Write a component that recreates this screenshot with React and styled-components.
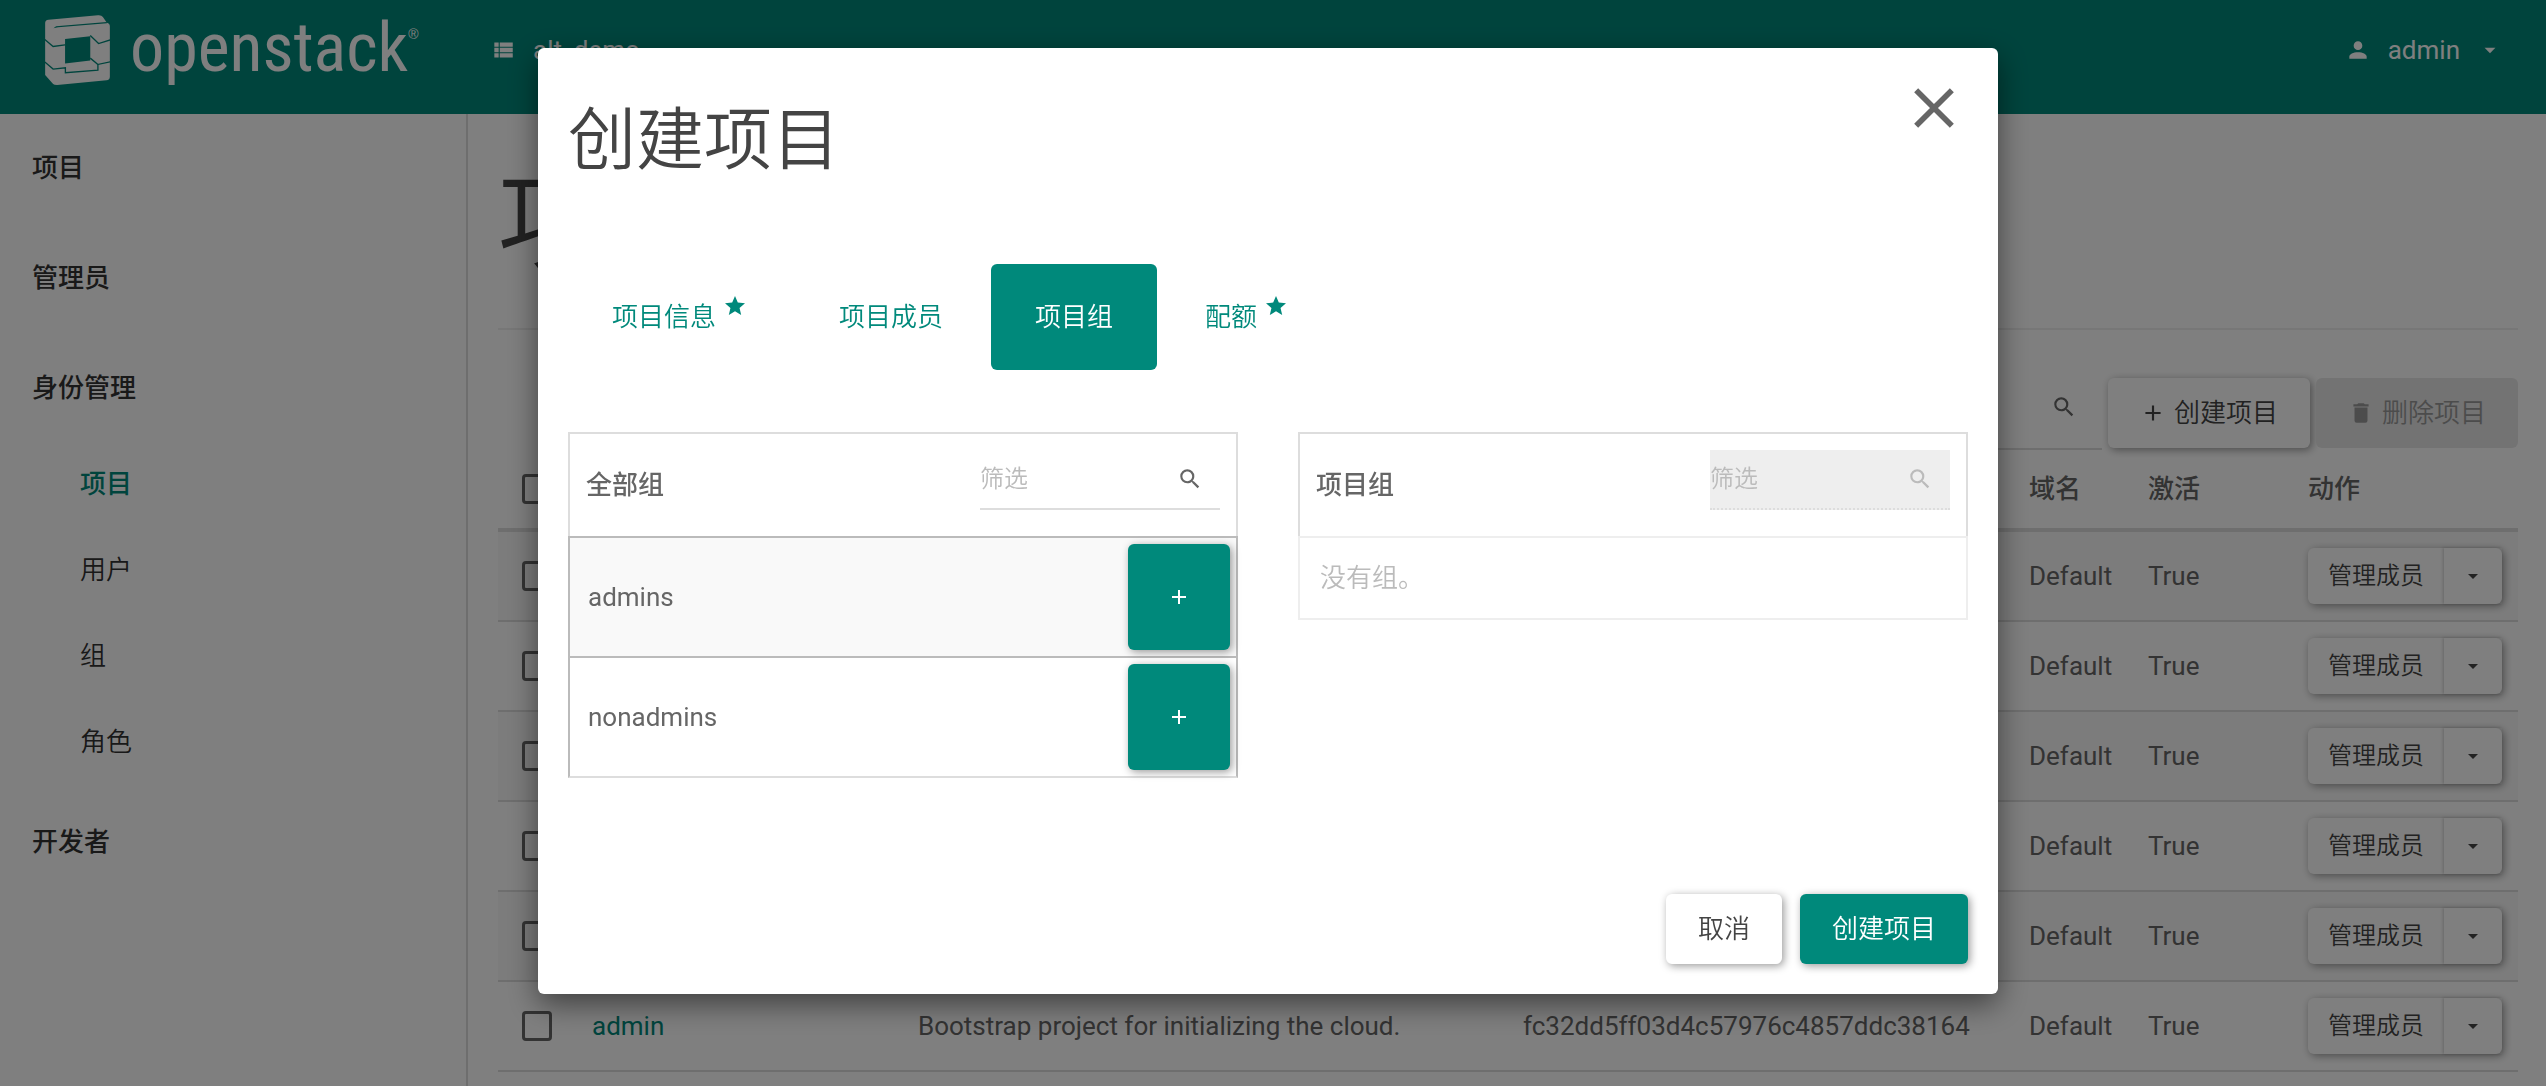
import styled, { createGlobalStyle } from "styled-components";

const ICONS = {
  list: "M9,5V9H21V5M9,19H21V15H9M9,14H21V10H9M4,9H8V5H4M4,19H8V15H4M4,14H8V10H4V14Z",
  account:
    "M12,4A4,4 0 0,1 16,8A4,4 0 0,1 12,12A4,4 0 0,1 8,8A4,4 0 0,1 12,4M12,14C16.42,14 20,15.79 20,18V20H4V18C4,15.79 7.58,14 12,14Z",
  caret: "M7,10L12,15L17,10H7Z",
  search:
    "M9.5,3A6.5,6.5 0 0,1 16,9.5C16,11.11 15.41,12.59 14.44,13.73L14.71,14H15.5L20.5,19L19,20.5L14,15.5V14.71L13.73,14.44C12.59,15.41 11.11,16 9.5,16A6.5,6.5 0 0,1 3,9.5A6.5,6.5 0 0,1 9.5,3M9.5,5C7,5 5,7 5,9.5C5,12 7,14 9.5,14C12,14 14,12 14,9.5C14,7 12,5 9.5,5Z",
  plus: "M19,13H13V19H11V13H5V11H11V5H13V11H19V13Z",
  trash:
    "M19,4H15.5L14.5,3H9.5L8.5,4H5V6H19M6,19A2,2 0 0,0 8,21H16A2,2 0 0,0 18,19V7H6V19Z",
  star: "M12,17.27L18.18,21L16.54,13.97L22,9.24L14.81,8.62L12,2L9.19,8.62L2,9.24L7.45,13.97L5.82,21L12,17.27Z",
  close:
    "M19,6.41L17.59,5L12,10.59L6.41,5L5,6.41L10.59,12L5,17.59L6.41,19L12,13.41L17.59,19L19,17.59L13.41,12L19,6.41Z",
};

function Icon({ name, size = 26 }) {
  return (
    <svg width={size} height={size} viewBox="0 0 24 24" fill="currentColor" aria-hidden="true">
      <path d={ICONS[name]} />
    </svg>
  );
}

function LogoMark() {
  return (
    <svg width="65" height="70" viewBox="27 20 195 211" aria-hidden="true">
      <path
        fill="#fff"
        d="M27 44Q27 35 37 34L186 21Q197 20 201 26L213 43Q222 45 222 54V206Q222 216 212 217L63 231Q54 231 51 228L27 201Z"
      />
      <path fill="#00897b" d="M87 92L163 84V157L87 166Z" />
      <path fill="#00897b" d="M52 60L60 54L213 41V45L66 57Z" />
      <g fill="none" stroke="#00897b" strokeWidth="4">
        <path d="M26 94L51 115L87 110" />
        <path d="M163 82L188 106L223 95" />
        <path d="M26 162L51 183L88 179V194L186 186V169L223 161" />
        <path d="M163 150L186 169" />
      </g>
    </svg>
  );
}

const menu = [
  { label: "项目" },
  { label: "管理员" },
  { label: "身份管理", children: ["项目", "用户", "组", "角色"] },
  { label: "开发者" },
];

const projects = [
  { key: 1 },
  { key: 2 },
  { key: 3 },
  { key: 4 },
  { key: 5 },
  {
    key: 6,
    name: "admin",
    desc: "Bootstrap project for initializing the cloud.",
    id: "fc32dd5ff03d4c57976c4857ddc38164",
  },
];

const tabs = [
  { label: "项目信息", required: true },
  { label: "项目成员" },
  { label: "项目组", active: true },
  { label: "配额", required: true },
];

const groups = ["admins", "nonadmins"];

function Filter({ label, disabled, toolbar }) {
  return (
    <FilterBox $disabled={disabled} $toolbar={toolbar}>
      <input
        type="text"
        placeholder={toolbar ? undefined : "筛选"}
        aria-label={label}
        disabled={disabled}
      />
      <Icon name="search" />
    </FilterBox>
  );
}

function App() {
  return (
    <>
      <GlobalStyle />
      <Header>
        <Brand href="#">
          <LogoMark />
          <BrandName>
            openstack<sup>®</sup>
          </BrandName>
        </Brand>
        <HeaderItem href="#">
          <Icon name="list" />
          alt_demo
        </HeaderItem>
        <UserMenu href="#">
          <Icon name="account" />
          admin
          <Icon name="caret" />
        </UserMenu>
      </Header>

      <Body>
        <Sidebar>
          {menu.map((item) => (
            <div key={item.label}>
              <MenuItem href="#">{item.label}</MenuItem>
              {item.children?.map((child, i) => (
                <SubItem href="#" key={child} $active={i === 0}>
                  {child}
                </SubItem>
              ))}
            </div>
          ))}
        </Sidebar>

        <Content>
          <PageTitle>项目</PageTitle>
          <Toolbar>
            <Filter label="筛选项目" toolbar />
            <Button type="button">
              <Icon name="plus" />
              创建项目
            </Button>
            <Button type="button" disabled>
              <Icon name="trash" />
              删除项目
            </Button>
          </Toolbar>
          <Table>
            <colgroup>
              <col width="78" />
              <col width="326" />
              <col />
              <col width="506" />
              <col width="119" />
              <col width="160" />
              <col width="226" />
            </colgroup>
            <thead>
              <tr>
                <th>
                  <Checkbox type="checkbox" aria-label="全选" />
                </th>
                <th aria-label="名称" />
                <th aria-label="描述" />
                <th aria-label="项目ID" />
                <th>域名</th>
                <th>激活</th>
                <th>动作</th>
              </tr>
            </thead>
            <tbody>
              {projects.map((p) => (
                <tr key={p.key}>
                  <td>
                    <Checkbox type="checkbox" aria-label="选择项目" />
                  </td>
                  <td>
                    <a href="#">{p.name}</a>
                  </td>
                  <td>{p.desc}</td>
                  <td>{p.id}</td>
                  <td>Default</td>
                  <td>True</td>
                  <td>
                    <ButtonGroup>
                      <button type="button">管理成员</button>
                      <button type="button" aria-label="更多">
                        <Icon name="caret" size={24} />
                      </button>
                    </ButtonGroup>
                  </td>
                </tr>
              ))}
            </tbody>
          </Table>
        </Content>
      </Body>

      <Backdrop>
        <Modal role="dialog" aria-labelledby="modal-title">
          <ModalHeader>
            <ModalTitle id="modal-title">创建项目</ModalTitle>
            <CloseButton type="button" aria-label="关闭">
              <Icon name="close" size={68} />
            </CloseButton>
          </ModalHeader>
          <Tabs role="tablist">
            {tabs.map((tab) => (
              <Tab type="button" role="tab" key={tab.label} $active={tab.active}>
                {tab.label}
                {tab.required && <Icon name="star" size={24} />}
              </Tab>
            ))}
          </Tabs>
          <Panels>
            <section>
              <PanelHeader>
                <PanelTitle>全部组</PanelTitle>
                <Filter label="筛选全部组" />
              </PanelHeader>
              <GroupList>
                {groups.map((group) => (
                  <li key={group}>
                    {group}
                    <AddButton type="button" aria-label={`添加 ${group}`}>
                      <Icon name="plus" size={24} />
                    </AddButton>
                  </li>
                ))}
              </GroupList>
            </section>
            <section>
              <PanelHeader>
                <PanelTitle>项目组</PanelTitle>
                <Filter label="筛选项目组" disabled />
              </PanelHeader>
              <EmptyMessage>没有组。</EmptyMessage>
            </section>
          </Panels>
          <ModalFooter>
            <Button type="button">取消</Button>
            <Button type="button" $primary>
              创建项目
            </Button>
          </ModalFooter>
        </Modal>
      </Backdrop>
    </>
  );
}

export default App;

const GlobalStyle = createGlobalStyle`
  * {
    box-sizing: border-box;
    margin: 0;
  }
  body {
    background: #fff;
    color: #666;
    font: 400 26px/36px Roboto, "Noto Sans CJK SC", sans-serif;
    overflow: hidden;
  }
  a {
    color: #00897b;
    text-decoration: none;
  }
  button, input {
    font: inherit;
    color: inherit;
  }
  button {
    border: 0;
    padding: 0;
    background: none;
    font-weight: 350;
    white-space: nowrap;
  }
  svg {
    display: block;
    flex: none;
  }
`;

const Header = styled.header`
  display: flex;
  align-items: center;
  height: 114px;
  padding: 0 43px 14px 45px;
  background: #00897b;
`;
const Brand = styled.a`
  display: flex;
  align-items: center;
  gap: 20px;
  width: 445px;
`;
const BrandName = styled.span`
  display: flex;
  padding-bottom: 4px;
  color: #fff;
  font: 400 68px/96px "Roboto Condensed", "Liberation Sans Narrow", sans-serif;

  sup {
    font: 400 14px/36px "Liberation Sans", sans-serif;
    padding-top: 16px;
  }
`;
const HeaderItem = styled.a`
  display: flex;
  align-items: center;
  gap: 17px;
  color: #fff;
`;
const UserMenu = styled(HeaderItem)`
  margin-left: auto;
`;

const Body = styled.div`
  display: flex;
  min-height: calc(100vh - 114px);
`;
const Sidebar = styled.nav`
  flex: none;
  width: 468px;
  border-right: 2px solid #ddd;
`;
const MenuItem = styled.a`
  display: block;
  padding: 36px 32px 38px;
  color: #333;
  font-weight: 500;
`;
const SubItem = styled.a`
  display: block;
  padding: 22px 80px 28px;
  color: ${(p) => (p.$active ? "#00897b" : "#333")};
  font-weight: ${(p) => (p.$active ? 500 : 350)};
`;

const Content = styled.main`
  flex: 1;
  min-width: 0;
  padding: 0 28px 0 30px;
`;
const PageTitle = styled.h1`
  padding: 46px 0 42px;
  border-bottom: 2px solid #eee;
  color: #444;
  font-size: 112px;
  font-weight: 350;
  line-height: 126px;
`;
const Toolbar = styled.div`
  display: flex;
  justify-content: flex-end;
  align-items: flex-start;
  gap: 6px;
  margin-top: 48px;
`;
const FilterBox = styled.label`
  display: flex;
  align-items: center;
  width: 240px;
  height: ${(p) => (p.$toolbar ? 72 : 60)}px;
  padding-right: ${(p) => (p.$toolbar ? 25 : 17)}px;
  padding-bottom: ${(p) => (p.$toolbar ? 12 : 0)}px;
  border-bottom: 2px ${(p) => (p.$disabled ? "dotted" : "solid")} #ddd;
  background: ${(p) => (p.$disabled ? "#eee" : "none")};
  color: ${(p) => (p.$disabled ? "#bbb" : "#666")};

  input {
    flex: 1;
    min-width: 0;
    border: 0;
    padding: 0;
    background: none;
    font-size: 24px;
    font-weight: 350;
  }
  input::placeholder {
    color: #bbb;
  }
`;
const Button = styled.button`
  display: flex;
  align-items: center;
  gap: 8px;
  height: 70px;
  padding: 0 32px;
  border-radius: 6px;
  background: ${(p) => (p.$primary ? "#00897b" : "#fff")};
  color: ${(p) => (p.$primary ? "#fff" : "#444")};
  box-shadow: 2px 2px 8px rgba(0, 0, 0, 0.4);

  &:disabled {
    background: #e6e6e6;
    color: #999;
    box-shadow: none;
  }
`;
const Table = styled.table`
  width: 100%;
  table-layout: fixed;
  border-spacing: 0;

  th,
  td {
    padding: 0 16px;
    text-align: left;
    white-space: nowrap;
  }
  th {
    height: 82px;
    border-bottom: 4px solid #ddd;
    font-weight: 500;
  }
  td {
    height: 90px;
    border-bottom: 2px solid #ddd;
  }
  th:first-child,
  td:first-child {
    padding-left: 24px;
  }
  tbody tr:nth-child(odd) {
    background: #f9f9f9;
  }
`;
const Checkbox = styled.input`
  display: block;
  appearance: none;
  width: 30px;
  height: 30px;
  border: 3px solid #666;
  border-radius: 4px;
`;
const ButtonGroup = styled.div`
  display: flex;
  width: max-content;
  border-radius: 6px;
  background: #fff;
  color: #444;
  box-shadow: 2px 2px 8px rgba(0, 0, 0, 0.4);

  button {
    height: 56px;
    padding: 0 20px;
    font-size: 24px;
  }
  button + button {
    padding: 0 17px;
    box-shadow: -1px 0 3px rgba(0, 0, 0, 0.2);
  }
`;

const Backdrop = styled.div`
  position: fixed;
  inset: 0;
  display: flex;
  justify-content: center;
  align-items: flex-start;
  padding: 48px 10px 48px 0;
  background: rgba(0, 0, 0, 0.5);
`;
const Modal = styled.div`
  width: 100%;
  max-width: 1460px;
  padding: 26px 30px 30px;
  border-radius: 6px;
  background: #fff;
  box-shadow: 0 10px 30px rgba(0, 0, 0, 0.5);
`;
const ModalHeader = styled.div`
  display: flex;
  justify-content: space-between;
  align-items: flex-start;
`;
const ModalTitle = styled.h2`
  padding-top: 30px;
  color: #444;
  font-size: 68px;
  font-weight: 350;
  line-height: 74px;
`;
const CloseButton = styled.button`
  color: #666;
`;
const Tabs = styled.div`
  display: flex;
  gap: 4px;
  margin: 86px 0 62px;
`;
const Tab = styled.button`
  display: flex;
  align-items: center;
  gap: 7px;
  height: 106px;
  padding: 0 44px;
  border-radius: 6px;
  background: ${(p) => (p.$active ? "#00897b" : "none")};
  color: ${(p) => (p.$active ? "#fff" : "#00897b")};

  svg {
    margin-bottom: 22px;
  }
`;
const Panels = styled.div`
  display: grid;
  grid-template-columns: 1fr 1fr;
  gap: 60px;
`;
const PanelHeader = styled.div`
  display: flex;
  justify-content: space-between;
  align-items: center;
  padding: 16px 16px 26px;
  border: 2px solid #ddd;
  border-bottom: 0;
`;
const PanelTitle = styled.h3`
  padding-top: 10px;
  font-size: 26px;
  font-weight: 500;
`;
const GroupList = styled.ul`
  padding: 0;
  list-style: none;

  li {
    display: flex;
    justify-content: space-between;
    align-items: center;
    padding: 6px 6px 6px 18px;
    border: 2px solid #bbb;
    border-bottom: 0;
  }
  li:nth-child(odd) {
    background: #f9f9f9;
  }
  li:last-child {
    border-bottom: 2px solid #ddd;
  }
`;
const AddButton = styled.button`
  display: flex;
  justify-content: center;
  align-items: center;
  width: 102px;
  height: 106px;
  border-radius: 6px;
  background: #00897b;
  color: #fff;
  box-shadow: 2px 2px 8px rgba(0, 0, 0, 0.4);
`;
const EmptyMessage = styled.p`
  padding: 22px 20px;
  border: 2px solid #eee;
  color: #bbb;
  font-weight: 350;
`;
const ModalFooter = styled.div`
  display: flex;
  justify-content: flex-end;
  gap: 18px;
  margin-top: 116px;
`;
